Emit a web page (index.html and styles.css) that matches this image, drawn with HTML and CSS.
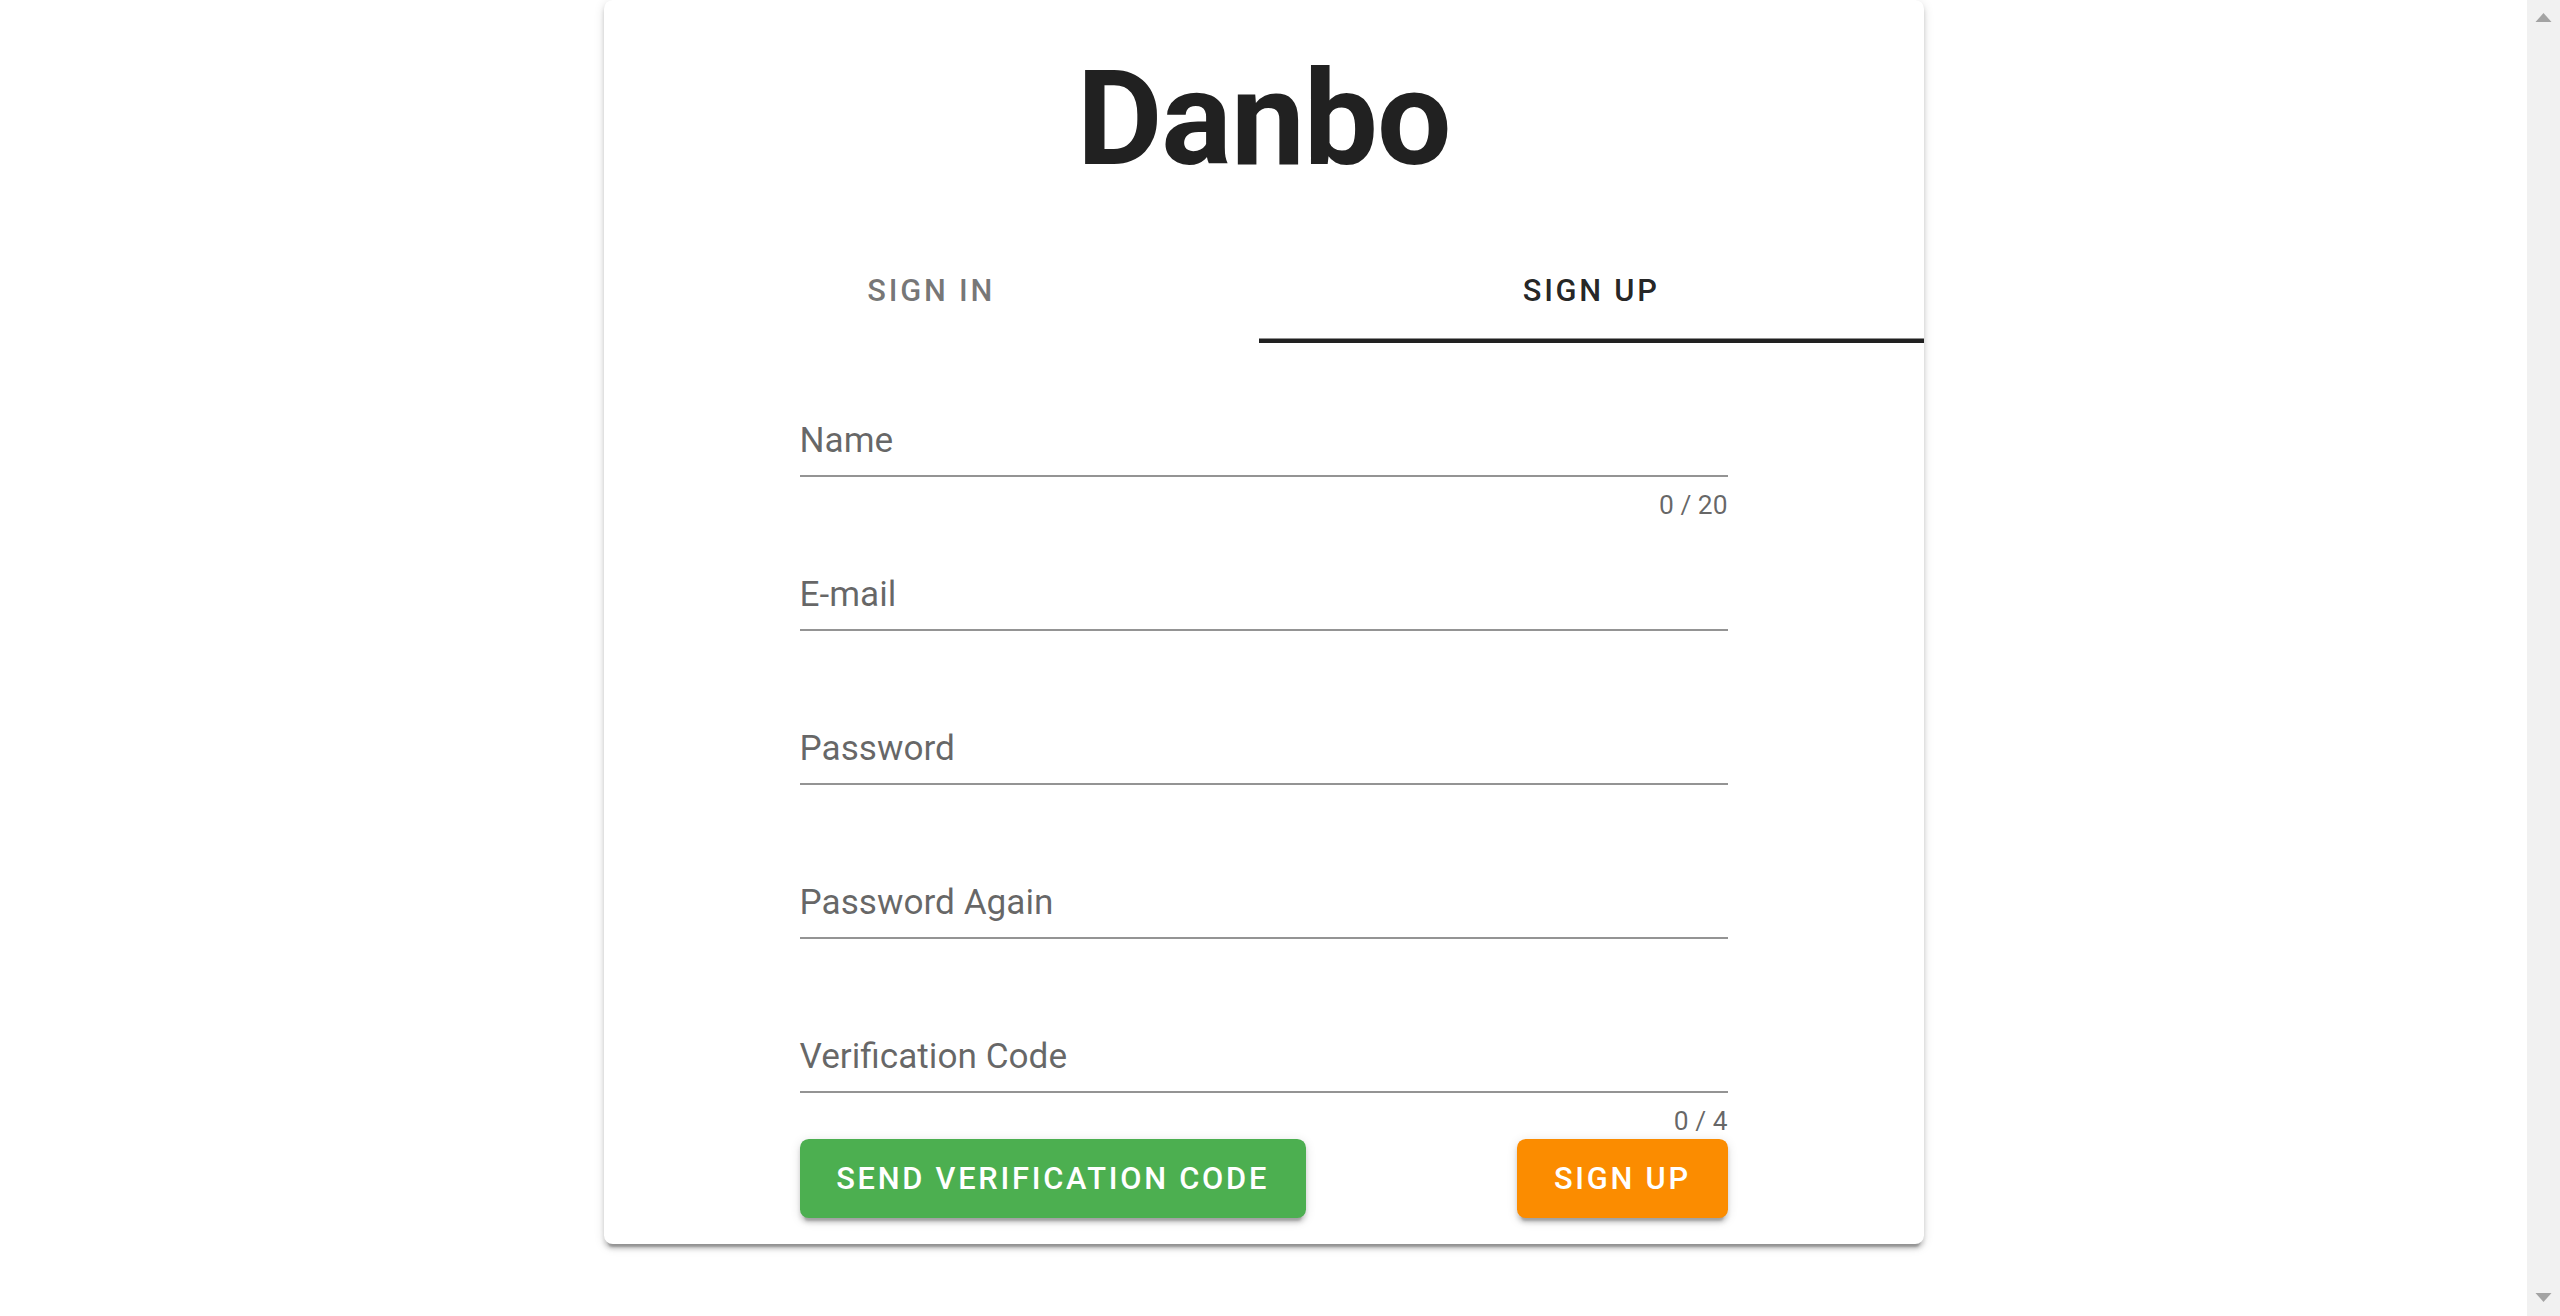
FILE: index.html
```html
<!DOCTYPE html>
<html lang="en">
<head>
<meta charset="utf-8">
<title>Danbo</title>
<link rel="stylesheet" href="styles.css">
</head>
<body>
<main class="page">
  <section class="card">
    <h1 class="brand">Danbo</h1>
    <nav class="tabs">
      <div class="tab">Sign In</div>
      <div class="tab tab-active">Sign Up</div>
    </nav>
    <form class="form">
      <div class="field">
        <div class="slot"><span class="label">Name</span></div>
        <div class="details"><span class="counter">0 / 20</span></div>
      </div>
      <div class="field">
        <div class="slot"><span class="label">E-mail</span></div>
        <div class="details"></div>
      </div>
      <div class="field">
        <div class="slot"><span class="label">Password</span></div>
        <div class="details"></div>
      </div>
      <div class="field">
        <div class="slot"><span class="label">Password Again</span></div>
        <div class="details"></div>
      </div>
      <div class="field">
        <div class="slot"><span class="label">Verification Code</span></div>
        <div class="details"><span class="counter">0 / 4</span></div>
      </div>
      <div class="actions">
        <button type="button" class="btn btn-green">Send Verification Code</button>
        <button type="button" class="btn btn-orange">Sign Up</button>
      </div>
    </form>
  </section>
</main>
<aside class="scrollbar" aria-hidden="true">
  <div class="sb-button">
    <svg class="sb-arrow" width="33" height="33" viewBox="0 0 33 33"><polygon points="8.5,22 16.5,13 24.5,22" fill="#a3a3a3"/></svg>
  </div>
  <div class="sb-track"></div>
  <div class="sb-button">
    <svg class="sb-arrow" width="33" height="33" viewBox="0 0 33 33"><polygon points="8.5,10 24.5,10 16.5,19" fill="#a3a3a3"/></svg>
  </div>
</aside>
</body>
</html>
```

FILE: styles.css
```css
html {
  height: 100%;
}

body {
  margin: 0;
  min-height: 100%;
  display: flex;
  background: #ffffff;
  font-family: Roboto, "Noto Sans", "Liberation Sans", sans-serif;
  color: rgba(0, 0, 0, 0.87);
}

.page {
  flex: 1 1 auto;
  min-width: 0;
}

.scrollbar {
  flex: 0 0 33px;
  height: 100vh;
  display: flex;
  flex-direction: column;
  background: #f1f1f1;
}

.sb-button {
  height: 33px;
  flex: 0 0 33px;
}

.sb-arrow {
  display: block;
}

.sb-track {
  flex: 1 1 auto;
}

.card {
  width: 1320px;
  margin: 0 auto;
  background: #ffffff;
  border-radius: 8.8px;
  box-shadow:
    0 6.6px 2.2px -4.4px rgba(0, 0, 0, 0.26),
    0 4.4px 4.4px 0 rgba(0, 0, 0, 0.16),
    0 2.2px 11px 0 rgba(0, 0, 0, 0.12);
}

.brand {
  margin: 0;
  padding-top: 42px;
  font-size: 132px;
  line-height: 154px;
  font-weight: 700;
  letter-spacing: -1.1px;
  text-align: center;
  color: #212121;
}

.tabs {
  display: flex;
  margin-top: 41.4px;
  height: 105.6px;
}

.tab {
  flex: 1 1 auto;
  display: flex;
  align-items: center;
  justify-content: center;
  font-size: 30.8px;
  font-weight: 500;
  letter-spacing: 2.75px;
  text-transform: uppercase;
  color: rgba(0, 0, 0, 0.54);
}

.tab-active {
  color: rgba(0, 0, 0, 0.87);
  box-shadow: inset 0 -4.4px 0 #212121;
}

.form {
  width: 928px;
  margin: 0 auto;
  padding-top: 28.6px;
  padding-bottom: 25.8px;
}

.field {
  padding-top: 35.2px;
}

.slot {
  box-sizing: border-box;
  height: 70.4px;
  padding-top: 11px;
  border-bottom: 2.2px solid #949494;
}

.label {
  display: block;
  font-size: 35.2px;
  line-height: 44px;
  color: rgba(0, 0, 0, 0.6);
}

.details {
  box-sizing: border-box;
  height: 48.4px;
  padding-top: 15px;
  text-align: right;
}

.counter {
  font-size: 26.4px;
  line-height: 26.4px;
  color: rgba(0, 0, 0, 0.6);
}

.actions {
  display: flex;
  justify-content: space-between;
  margin-top: -2.6px;
}

.btn {
  height: 79.2px;
  padding: 0 36.7px;
  border: 0;
  border-radius: 8.8px;
  font-family: Roboto, "Noto Sans", "Liberation Sans", sans-serif;
  font-size: 30.8px;
  font-weight: 500;
  letter-spacing: 2.75px;
  text-transform: uppercase;
  color: #ffffff;
  box-shadow:
    0 6.6px 2.2px -4.4px rgba(0, 0, 0, 0.2),
    0 4.4px 4.4px 0 rgba(0, 0, 0, 0.14),
    0 2.2px 11px 0 rgba(0, 0, 0, 0.12);
}

.btn-green {
  background: #4caf50;
}

.btn-orange {
  background: #fb8c00;
}
```
